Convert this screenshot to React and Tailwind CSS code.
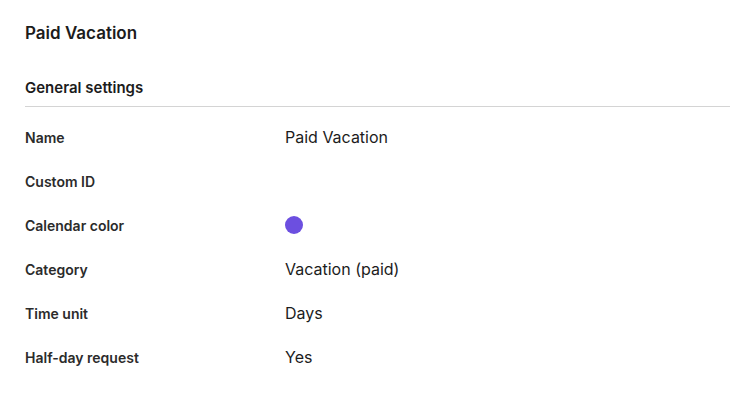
import React from "react";

const rows = [
  { label: "Name", value: "Paid Vacation" },
  { label: "Custom ID", value: "" },
  { label: "Calendar color", color: "#6c4fe0" },
  { label: "Category", value: "Vacation (paid)" },
  { label: "Time unit", value: "Days" },
  { label: "Half-day request", value: "Yes" },
];

export default function App() {
  return (
    <div className="min-h-screen w-full bg-white pl-[25px] pt-[22px] font-['Inter',sans-serif] text-[#1c1c1c]">
      <h1 className="text-[17px] font-semibold leading-[22px]">Paid Vacation</h1>

      <div className="mt-[34px] border-b border-[#d4d4d4] pb-[8px]">
        <h2 className="text-[15px] font-semibold leading-[20px]">General settings</h2>
      </div>

      <div className="pt-[8px]">
        {rows.map((row) => (
          <div key={row.label} className="flex h-[44px] items-center">
            <div className="w-[260px] text-[14px] font-semibold text-[#2b2b2b]">{row.label}</div>
            <div className="text-[16px]">
              {row.color ? (
                <span className="block h-[18px] w-[18px] rounded-full bg-[#6c4fe0]" />
              ) : (
                row.value
              )}
            </div>
          </div>
        ))}
      </div>
    </div>
  );
}
